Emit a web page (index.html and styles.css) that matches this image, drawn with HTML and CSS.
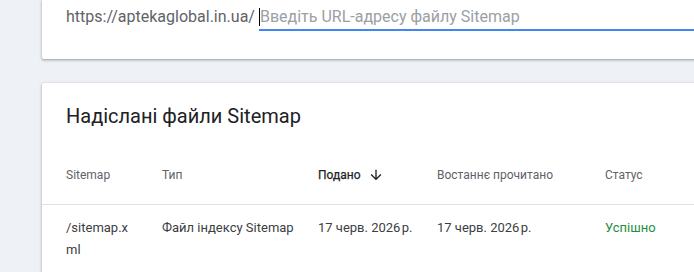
FILE: index.html
```html
<!DOCTYPE html>
<html lang="uk">
<head>
<meta charset="utf-8">
<link rel="stylesheet" href="styles.css">
</head>
<body>
<div class="page">
  <section class="card card-submit">
    <div class="submit-row">
      <span class="prefix">https://aptekaglobal.in.ua/</span>
      <div class="field">
        <span class="caret"></span>
        <input class="field-input" type="text" placeholder="Введіть URL-адресу файлу Sitemap">
      </div>
    </div>
  </section>

  <section class="card card-list">
    <h2 class="card-title">Надіслані файли Sitemap</h2>
    <div class="table">
      <div class="row head">
        <div class="cell">Sitemap</div>
        <div class="cell">Тип</div>
        <div class="cell sorted">Подано
          <svg class="sort-icon" viewBox="0 0 24 24" width="16" height="16"><path d="M20 12l-1.41-1.41L13 16.17V4h-2v12.17l-5.58-5.59L4 12l8 8 8-8z" fill="#202124"/></svg>
        </div>
        <div class="cell">Востаннє прочитано</div>
        <div class="cell">Статус</div>
      </div>
      <div class="row body">
        <div class="cell wrap">/sitemap.xml</div>
        <div class="cell">Файл індексу Sitemap</div>
        <div class="cell">17 черв. 2026&#8202;р.</div>
        <div class="cell">17 черв. 2026&#8202;р.</div>
        <div class="cell ok">Успішно</div>
      </div>
    </div>
  </section>
</div>
</body>
</html>
```

FILE: styles.css
```css
html, body {
  margin: 0;
  padding: 0;
  background: #eef1f5;
}

body {
  font-family: Roboto, "Noto Sans", Arial, sans-serif;
  color: #202124;
}

.page {
  width: 694px;
  height: 272px;
  overflow: hidden;
  padding-left: 42px;
  box-sizing: border-box;
}

.card {
  background: #fff;
  margin-right: -8px;
  box-shadow: 0 1px 2px rgba(60, 64, 67, 0.3), 0 1px 3px 1px rgba(60, 64, 67, 0.15);
}

.card-submit {
  padding: 5px 0 28px 24px;
  border-radius: 0 0 2px 2px;
}

.submit-row {
  display: flex;
  align-items: flex-start;
}

.prefix {
  font-size: 16px;
  line-height: 24px;
  color: #5f6368;
  white-space: nowrap;
}

.field {
  flex: 1;
  display: flex;
  align-items: center;
  margin-left: 4px;
  border-bottom: 2px solid #4285f4;
  height: 24px;
}

.caret {
  width: 1px;
  height: 18px;
  background: #000;
  flex: none;
}

.field-input {
  flex: 1;
  min-width: 0;
  border: none;
  outline: none;
  padding: 0;
  margin: 0;
  font-family: inherit;
  font-size: 16px;
  line-height: 24px;
  height: 24px;
  color: #202124;
  background: transparent;
}

.field-input::placeholder {
  color: #9aa0a6;
}

.card-list {
  margin-top: 24px;
  border-radius: 2px 2px 0 0;
  padding-top: 19px;
  height: 200px;
}

.card-title {
  margin: 0 0 0 24px;
  font-size: 20px;
  line-height: 28px;
  font-weight: 400;
  color: #202124;
}

.table {
  margin-top: 19px;
}

.row {
  display: grid;
  grid-template-columns: 72px 132px 95px 144px 1fr;
  column-gap: 24px;
  padding-left: 24px;
}

.head {
  font-size: 12px;
  line-height: 52px;
  padding-bottom: 3px;
  color: #5f6368;
  border-bottom: 1px solid #e0e0e0;
}

.head .cell {
  white-space: nowrap;
}

.sorted {
  color: #202124;
  font-weight: 400;
  -webkit-text-stroke: 0.25px #202124;
  display: flex;
  align-items: center;
}

.sort-icon {
  margin-left: 7px;
}

.body {
  font-size: 13px;
  line-height: 22px;
  padding-top: 12px;
  color: #3c4043;
}

.body .cell {
  white-space: nowrap;
}

.body .wrap {
  white-space: normal;
  word-break: break-all;
}

.ok {
  color: #1e8e3e;
}
```
